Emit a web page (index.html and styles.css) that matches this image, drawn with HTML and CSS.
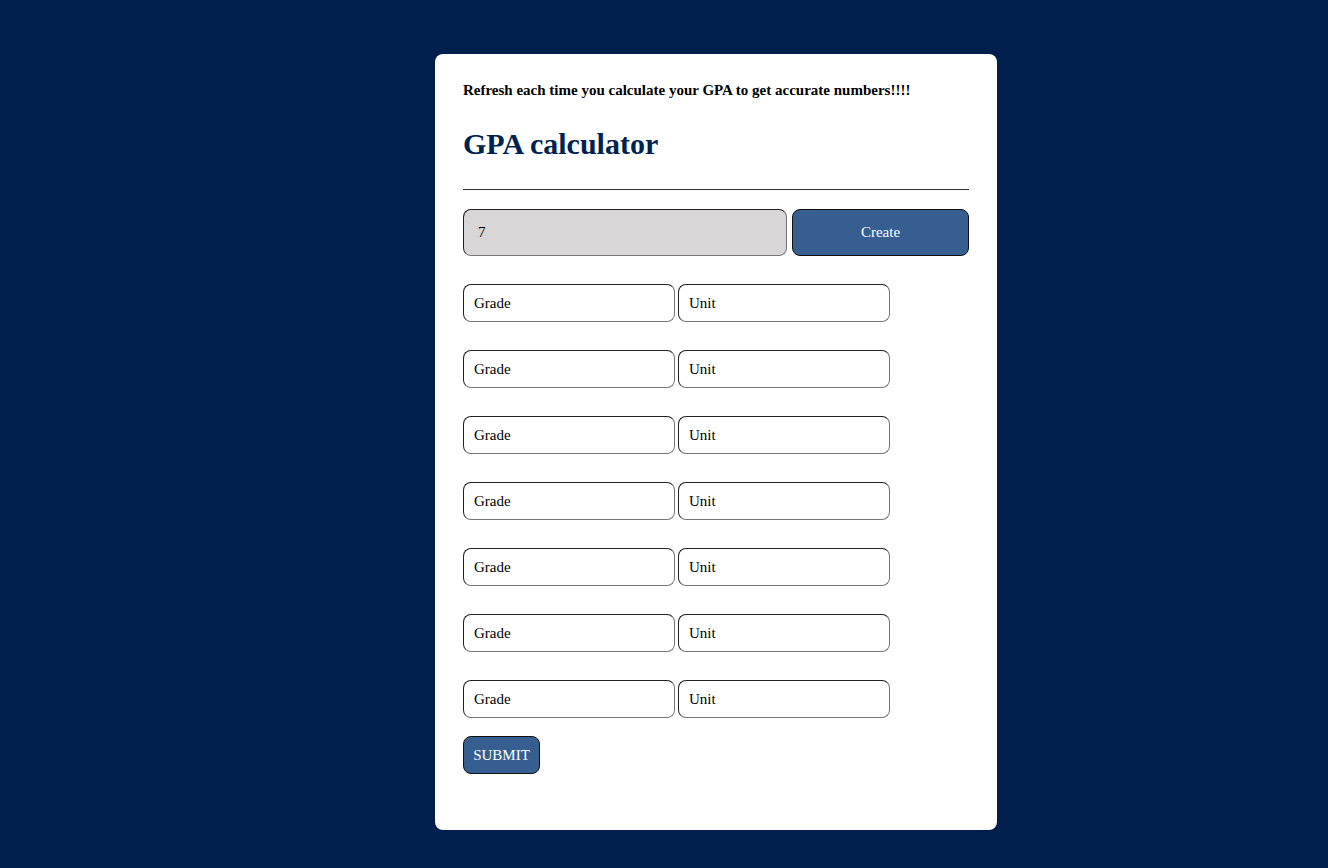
FILE: index.html
```html
<!DOCTYPE html>
<html lang="en">
<head>
<meta charset="utf-8">
<title>GPA calculator</title>
<link rel="stylesheet" href="styles.css">
</head>
<body>
<main class="card">
  <p class="notice">Refresh each time you calculate your GPA to get accurate numbers!!!!</p>
  <h1 class="title">GPA calculator</h1>
  <hr class="rule">
  <div class="create-row">
    <input class="count" type="text" value="7">
    <button class="create-btn" type="button">Create</button>
  </div>
  <div class="rows">
    <div class="row"><input class="field" placeholder="Grade"><input class="field" placeholder="Unit"></div>
    <div class="row"><input class="field" placeholder="Grade"><input class="field" placeholder="Unit"></div>
    <div class="row"><input class="field" placeholder="Grade"><input class="field" placeholder="Unit"></div>
    <div class="row"><input class="field" placeholder="Grade"><input class="field" placeholder="Unit"></div>
    <div class="row"><input class="field" placeholder="Grade"><input class="field" placeholder="Unit"></div>
    <div class="row"><input class="field" placeholder="Grade"><input class="field" placeholder="Unit"></div>
    <div class="row"><input class="field" placeholder="Grade"><input class="field" placeholder="Unit"></div>
  </div>
  <button class="submit-btn" type="button">SUBMIT</button>
</main>
</body>
</html>
```
FILE: styles.css
```css
html, body {
  margin: 0;
  padding: 0;
}
body {
  background: #001f4d;
  font-family: "Liberation Serif", "Times New Roman", serif;
  min-height: 868px;
  display: flex;
  justify-content: center;
  align-items: flex-start;
}
.card {
  box-sizing: border-box;
  width: 562px;
  margin-top: 54px;
  margin-left: 104px;
  background: #ffffff;
  border-radius: 8px;
  padding: 28px 28px 56px;
  display: flex;
  flex-direction: column;
}
.notice {
  margin: 0;
  font-size: 15px;
  font-weight: bold;
  line-height: 17px;
  color: #000;
}
.title {
  margin: 28px 0 0;
  font-size: 30px;
  line-height: 34px;
  font-weight: bold;
  color: #002251;
}
.rule {
  margin: 28px 0 0;
  border: 0;
  border-top: 1px solid #333;
  height: 0;
}
.create-row {
  display: flex;
  gap: 5px;
  margin-top: 19px;
}
.count {
  box-sizing: border-box;
  width: 324px;
  height: 47px;
  background: #d8d6d6;
  border: 1px inset #767676;
  border-radius: 8px;
  padding: 0 14px;
  font-family: inherit;
  font-size: 15px;
  color: #000;
}
.create-btn {
  box-sizing: border-box;
  width: 177px;
  height: 47px;
  background: #365e91;
  color: #fff;
  border: 1px solid #111;
  border-radius: 8px;
  font-family: inherit;
  font-size: 15px;
}
.rows {
  display: flex;
  flex-direction: column;
  gap: 28px;
  margin-top: 28px;
}
.row {
  display: flex;
  gap: 3px;
}
.field {
  box-sizing: border-box;
  width: 212px;
  height: 38px;
  border: 1px inset #767676;
  border-radius: 8px;
  padding: 0 10px;
  font-family: inherit;
  font-size: 15px;
  background: #fff;
}
.field::placeholder {
  color: #000;
  opacity: 1;
}
.submit-btn {
  box-sizing: border-box;
  align-self: flex-start;
  margin-top: 18px;
  width: 77px;
  height: 38px;
  background: #365e91;
  color: #fff;
  border: 1px solid #111;
  border-radius: 8px;
  font-family: inherit;
  font-size: 15px;
  padding: 0;
}
```
